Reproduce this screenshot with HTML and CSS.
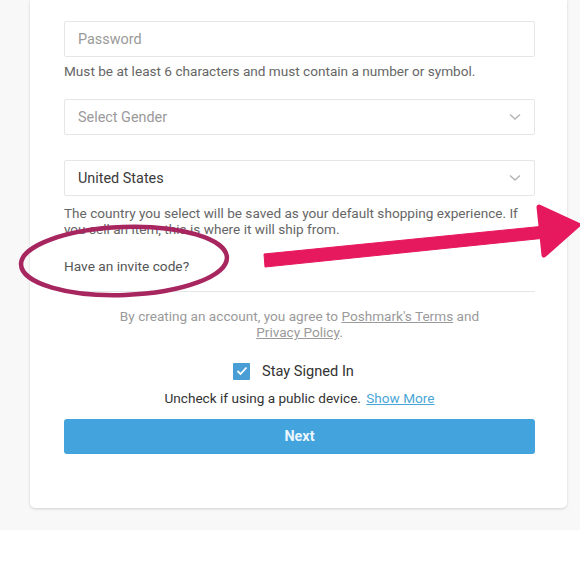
FILE: index.html
```html
<!DOCTYPE html>
<html lang="en">
<head>
<meta charset="utf-8">
<title>Sign up</title>
<link rel="stylesheet" href="styles.css">
</head>
<body>
<div class="page">
  <div class="card">
    <div class="field"><span class="placeholder">Password</span></div>
    <p class="hint">Must be at least 6 characters and must contain a number or symbol.</p>

    <div class="field select gender"><span class="placeholder">Select Gender</span>
      <svg class="chev" width="12" height="8" viewBox="0 0 12 8"><path d="M1 1.5 L6 6 L11 1.5" fill="none" stroke="#b5b5b5" stroke-width="1.5"/></svg>
    </div>

    <div class="field select country"><span class="value">United States</span>
      <svg class="chev" width="12" height="8" viewBox="0 0 12 8"><path d="M1 1.5 L6 6 L11 1.5" fill="none" stroke="#b5b5b5" stroke-width="1.5"/></svg>
    </div>
    <p class="hint country-hint">The country you select will be saved as your default shopping experience. If you sell an item, this is where it will ship from.</p>

    <p class="invite">Have an invite code?</p>
    <div class="divider"></div>

    <p class="terms">By creating an account, you agree to <a href="#">Poshmark's Terms</a> and<br><a href="#">Privacy Policy</a>.</p>

    <div class="stay">
      <span class="check"><svg width="12" height="10" viewBox="0 0 12 10"><path d="M1.5 5 L4.5 8 L10.5 1.5" fill="none" stroke="#fff" stroke-width="1.8"/></svg></span>
      <span class="stay-label">Stay Signed In</span>
    </div>
    <p class="uncheck">Uncheck if using a public device. <a href="#">Show More</a></p>

    <button class="next">Next</button>
  </div>
</div>

<svg class="annot" width="580" height="580" viewBox="0 0 580 580">
  <ellipse cx="124" cy="261" rx="103" ry="34" transform="rotate(-2 124 261)" fill="none" stroke="#a8265f" stroke-width="4.5"/>
  <polygon points="264,254 545,226 546,238 265,267" fill="#e6185e" stroke="#e6185e" stroke-width="1" stroke-linejoin="round"/>
  <polygon points="539,207 578,225 544,255" fill="#e6185e" stroke="#e6185e" stroke-width="5" stroke-linejoin="round"/>
</svg>
</body>
</html>
```

FILE: styles.css
```css
html, body {
  margin: 0;
  padding: 0;
  background: #ffffff;
}
body {
  font-family: Roboto, "Liberation Sans", Arial, sans-serif;
  color: #333;
  width: 580px;
  height: 580px;
  overflow: hidden;
  position: relative;
}
.page {
  background: #f8f8f8;
  padding-bottom: 22px;
}
.card {
  margin-left: 30px;
  width: 537px;
  box-sizing: border-box;
  background: #fff;
  border-radius: 0 0 5px 5px;
  box-shadow: 0 1px 3px rgba(0,0,0,0.16);
  padding: 21px 32px 54px 34px;
}
.field {
  height: 36px;
  box-sizing: border-box;
  border: 1px solid #e6e6e6;
  border-radius: 2px;
  display: flex;
  align-items: center;
  justify-content: space-between;
  padding: 0 13px 0 13px;
  font-size: 14.4px;
}
.placeholder { color: #9a9a9a; }
.value { color: #3a3a3a; }
.chev { display: block; margin-right: 0; }
.hint {
  margin: 6px 0 0;
  font-size: 13.6px;
  line-height: 16px;
  color: #666;
}
.gender { margin-top: 20px; }
.country { margin-top: 25px; }
.country-hint { margin-top: 9px; }
.invite {
  margin: 21px 0 0;
  font-size: 13.7px;
  line-height: 16px;
  color: #555;
}
.divider {
  margin-top: 17px;
  height: 1px;
  background: #e6e6e6;
}
.terms {
  margin: 16px 0 0;
  text-align: center;
  font-size: 13.6px;
  line-height: 16px;
  color: #9a9a9a;
}
.terms a { color: #9a9a9a; text-decoration: underline; }
.stay {
  margin-top: 21px;
  height: 20px;
  display: flex;
  align-items: center;
  justify-content: center;
  gap: 12px;
  padding-right: 12px;
}
.check {
  width: 17px;
  height: 17px;
  background: #4a9ed6;
  border-radius: 1px;
  display: flex;
  align-items: center;
  justify-content: center;
}
.check svg { display: block; }
.stay-label { font-size: 14.6px; color: #333; }
.uncheck {
  margin: 9px 0 0;
  text-align: center;
  font-size: 13.6px;
  line-height: 16px;
  color: #333;
}
.uncheck a { color: #4aa6d6; text-decoration: underline; margin-left: 2px; }
.next {
  display: block;
  width: 100%;
  margin-top: 13px;
  height: 35px;
  border: none;
  border-radius: 3px;
  background: #43a3dd;
  color: #eaf6ff;
  font-family: Roboto, "Liberation Sans", Arial, sans-serif;
  font-weight: 700;
  font-size: 14.4px;
}
.annot {
  position: absolute;
  left: 0;
  top: 0;
  pointer-events: none;
}
```
